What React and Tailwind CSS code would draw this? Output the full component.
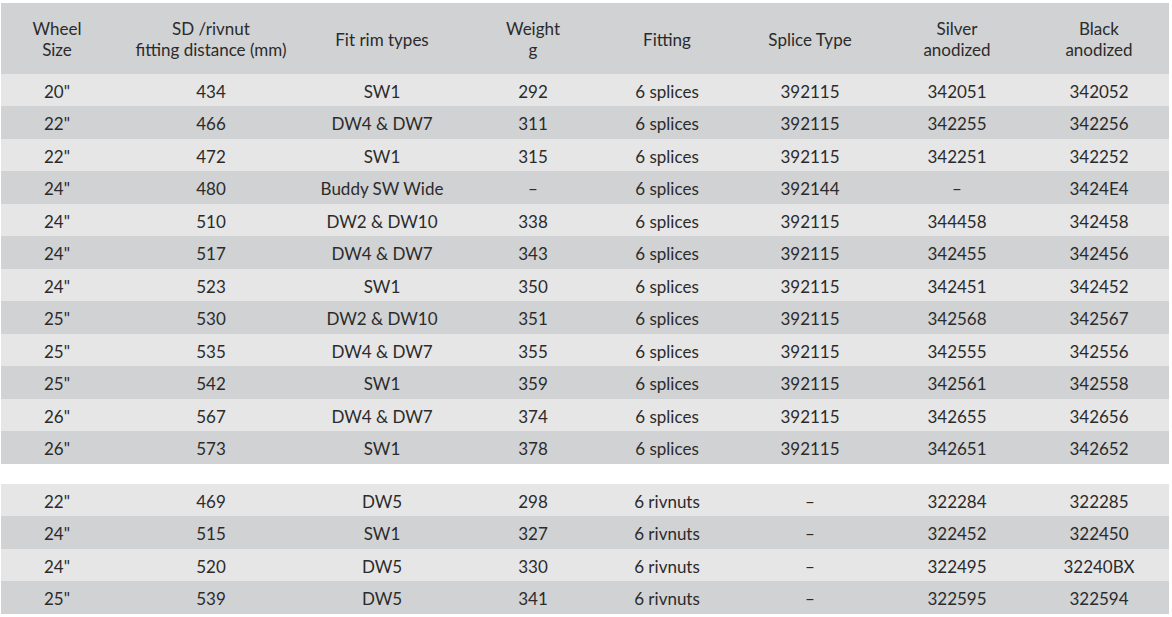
const COLS = [
  "w-[112px]",
  "w-[196px]",
  "w-[146px]",
  "w-[156px]",
  "w-[112px]",
  "w-[174px]",
  "w-[120px]",
  "w-[152px] pl-[12px]",
];

const HEADERS = [
  ["Wheel", "Size"],
  ["SD /rivnut", "fitting distance (mm)"],
  ["Fit rim types"],
  ["Weight", "g"],
  ["Fitting"],
  ["Splice Type"],
  ["Silver", "anodized"],
  ["Black", "anodized"],
];

const SPLICES = [
  ['20"', "434", "SW1", "292", "6 splices", "392115", "342051", "342052"],
  ['22"', "466", "DW4 & DW7", "311", "6 splices", "392115", "342255", "342256"],
  ['22"', "472", "SW1", "315", "6 splices", "392115", "342251", "342252"],
  ['24"', "480", "Buddy SW Wide", "–", "6 splices", "392144", "–", "3424E4"],
  ['24"', "510", "DW2 & DW10", "338", "6 splices", "392115", "344458", "342458"],
  ['24"', "517", "DW4 & DW7", "343", "6 splices", "392115", "342455", "342456"],
  ['24"', "523", "SW1", "350", "6 splices", "392115", "342451", "342452"],
  ['25"', "530", "DW2 & DW10", "351", "6 splices", "392115", "342568", "342567"],
  ['25"', "535", "DW4 & DW7", "355", "6 splices", "392115", "342555", "342556"],
  ['25"', "542", "SW1", "359", "6 splices", "392115", "342561", "342558"],
  ['26"', "567", "DW4 & DW7", "374", "6 splices", "392115", "342655", "342656"],
  ['26"', "573", "SW1", "378", "6 splices", "392115", "342651", "342652"],
];

const RIVNUTS = [
  ['22"', "469", "DW5", "298", "6 rivnuts", "–", "322284", "322285"],
  ['24"', "515", "SW1", "327", "6 rivnuts", "–", "322452", "322450"],
  ['24"', "520", "DW5", "330", "6 rivnuts", "–", "322495", "32240BX"],
  ['25"', "539", "DW5", "341", "6 rivnuts", "–", "322595", "322594"],
];

function Row({ cells, dark }) {
  return (
    <div className={`flex h-[32.5px] items-center pt-[3px] ${dark ? "bg-[#d1d2d4]" : "bg-[#e6e6e6]"}`}>
      {cells.map((c, i) => (
        <div key={i} className={`${COLS[i]} text-center`}>
          {c}
        </div>
      ))}
    </div>
  );
}

export default function App() {
  return (
    <div className="w-[1172px] h-[617px] bg-white pt-[3px] pl-[1px] font-['Lato','Liberation_Sans',sans-serif] text-[17px] text-[#2b2b2b]">
      <div className="w-[1168px]">
        {/* ── Header ─────────────────────────────────── */}
        <div className="flex h-[70.5px] items-center pt-[2px] bg-[#d1d2d4] leading-[21px]">
          {HEADERS.map((h, i) => (
            <div key={i} className={`${COLS[i]} text-center`}>
              {h.map((line) => (
                <div key={line}>{line}</div>
              ))}
            </div>
          ))}
        </div>

        {/* ── Splice fittings ────────────────────────── */}
        {SPLICES.map((r, i) => (
          <Row key={i} cells={r} dark={i % 2 === 1} />
        ))}

        <div className="h-[20px]" />

        {/* ── Rivnut fittings ────────────────────────── */}
        {RIVNUTS.map((r, i) => (
          <Row key={i} cells={r} dark={i % 2 === 1} />
        ))}
      </div>
    </div>
  );
}
